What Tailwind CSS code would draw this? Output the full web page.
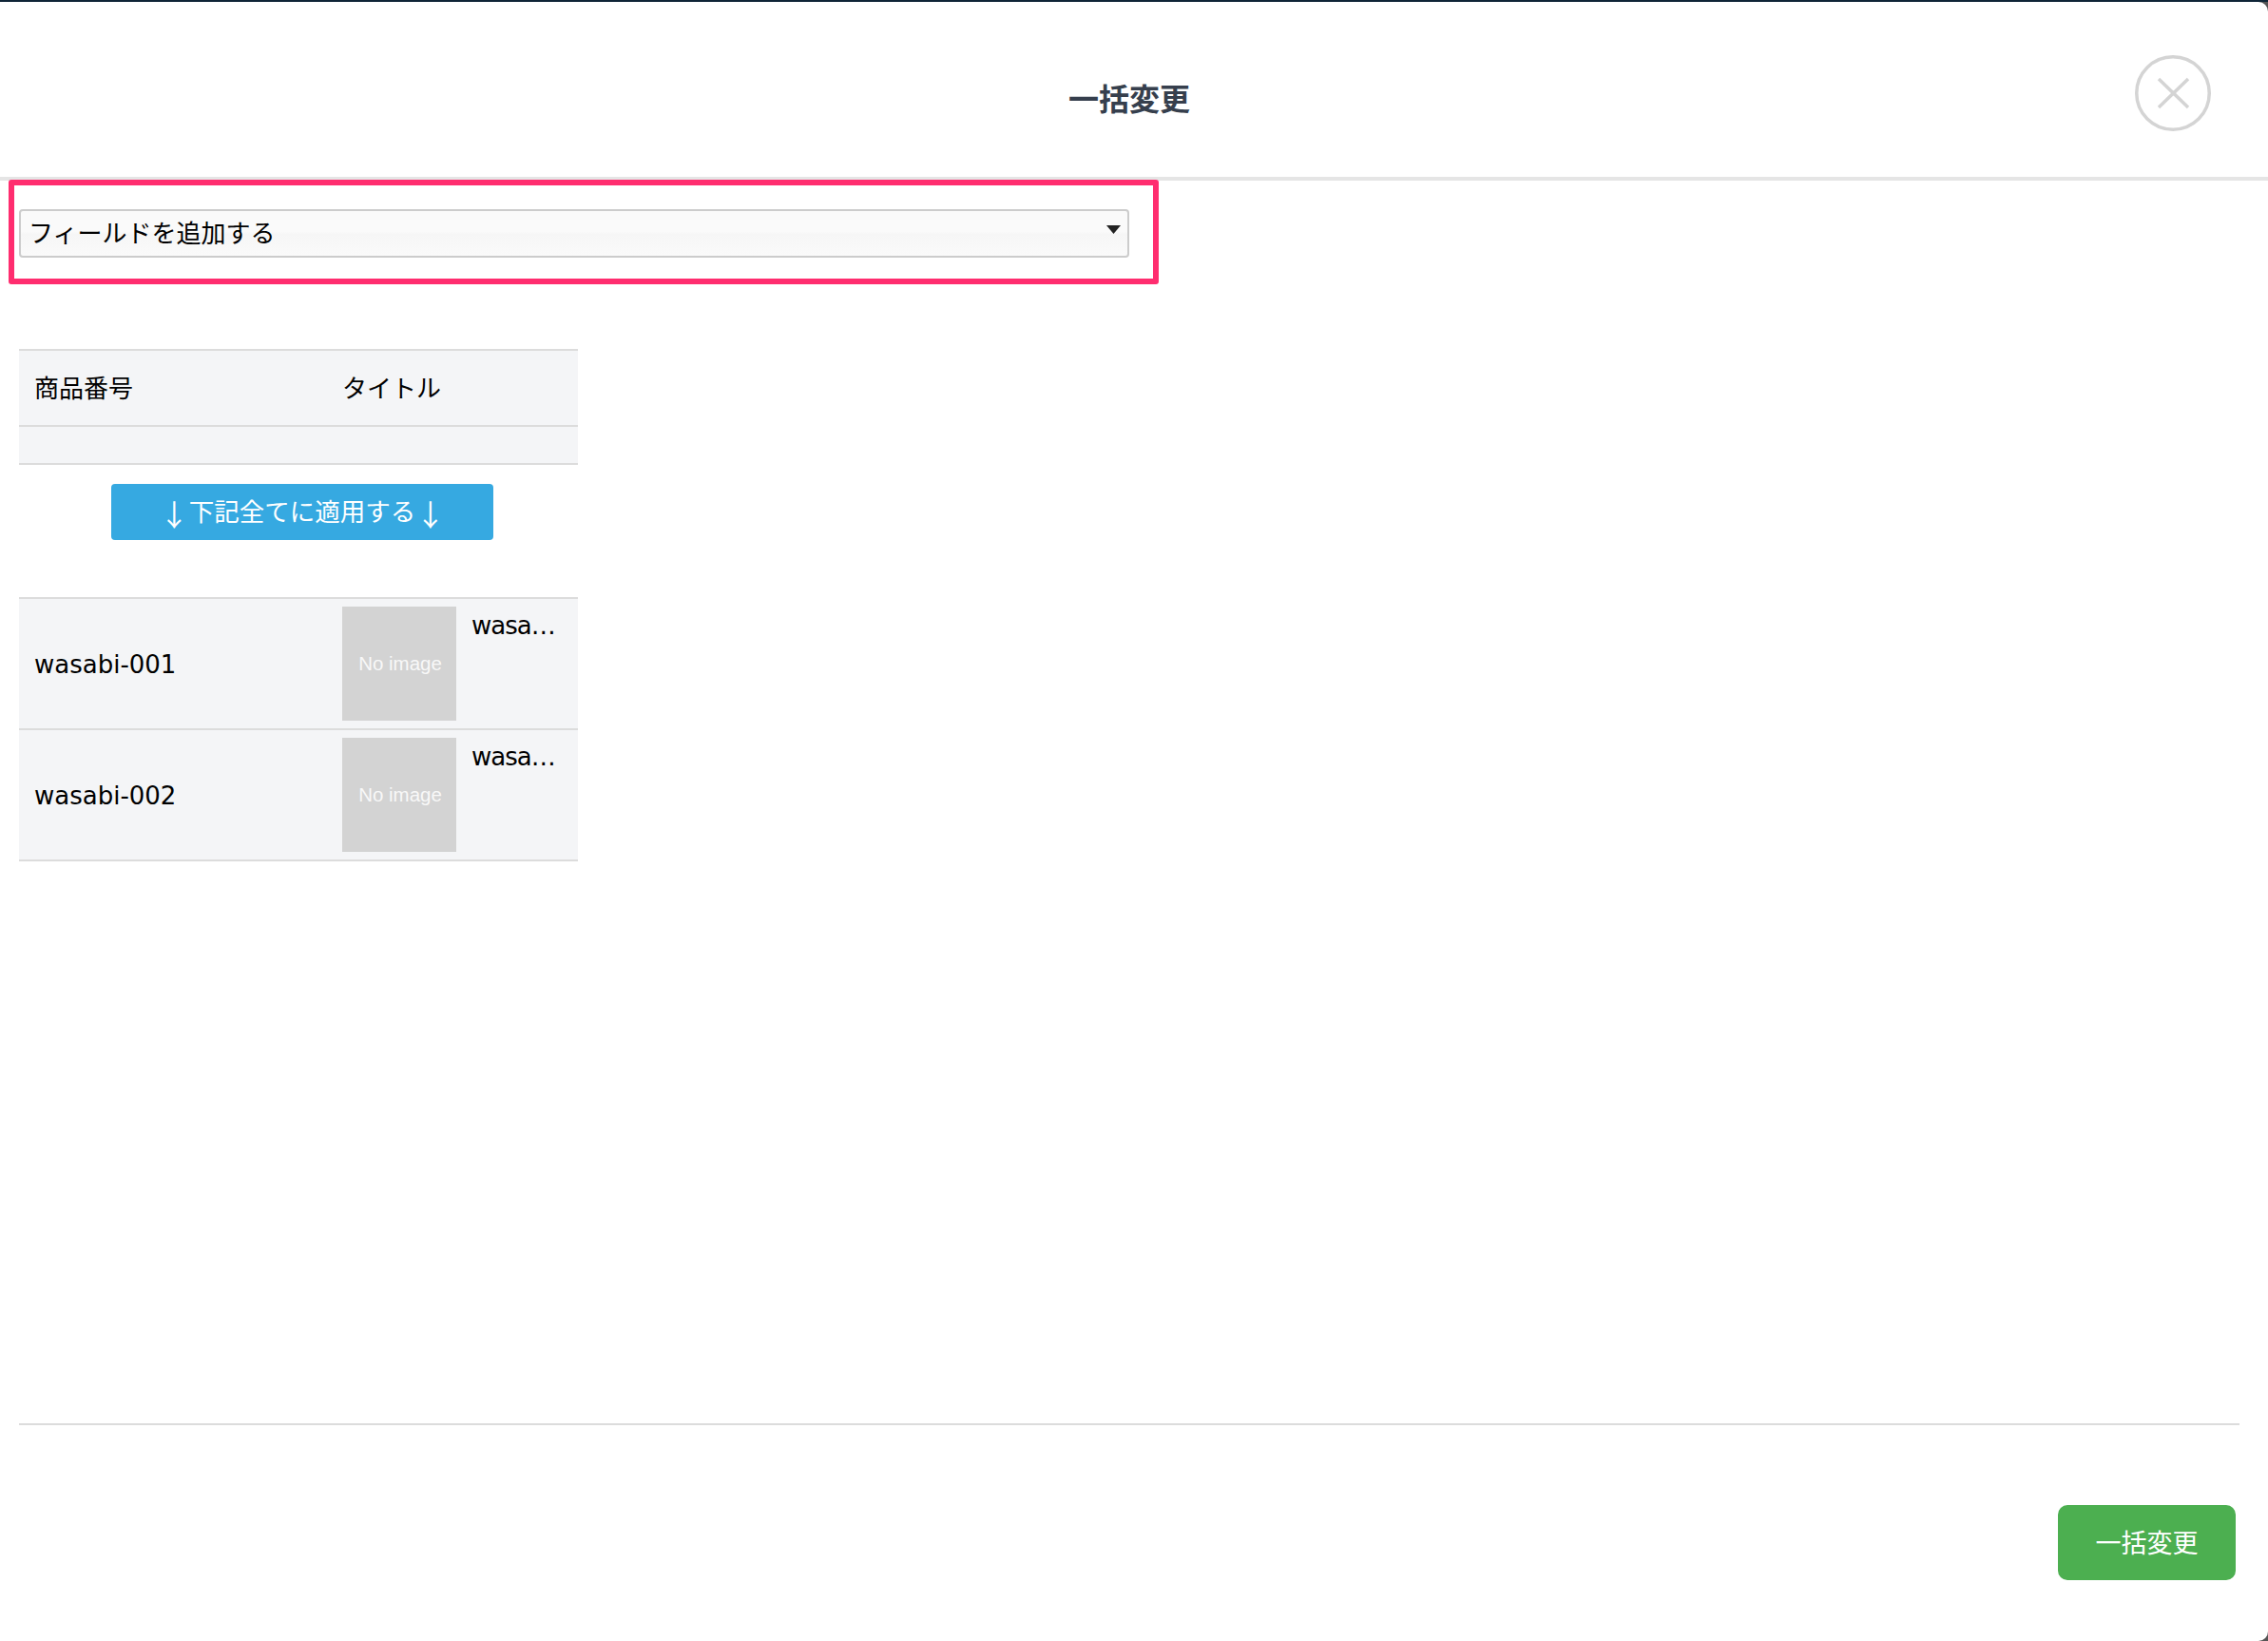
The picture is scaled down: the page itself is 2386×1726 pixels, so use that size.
<!DOCTYPE html>
<html lang="ja">
<head>
<meta charset="utf-8">
<title>一括変更</title>
<script src="https://cdn.jsdelivr.net/npm/@tailwindcss/browser@4"></script>
</head>
<body class="bg-[#555555] m-0">
<div class="relative w-[2386px] h-[1726px] overflow-hidden bg-[#555555] border-t-2 border-[#0f2537] font-['Noto_Sans_CJK_JP','Noto_Sans_CJK_SC',sans-serif] text-[26px] text-black">
  <div class="flex flex-col h-[1724px] bg-white rounded-tr-[10px] rounded-br-[10px]">
    <header class="relative h-[188px] shrink-0 flex items-center justify-center border-b-[4px] border-[#e5e5e5] pr-[10px]">
      <h1 class="text-[32px] font-bold text-[#363f4d] leading-none mt-[16px]">一括変更</h1>
      <button class="absolute left-[2246px] top-[56px] w-[80px] h-[80px]" aria-label="閉じる">
        <svg viewBox="0 0 80 80" class="w-[80px] h-[80px]" fill="none" stroke="#d4d4d4" stroke-width="3.5">
          <circle cx="40" cy="40" r="38.25"/>
          <path d="M25 25 L56 55 M56 25 L25 55"/>
        </svg>
      </button>
    </header>
    <main class="flex-1 flex flex-col relative">
      <div class="ml-[9px] mt-[-1px] w-[1210px] h-[110px] border-[6px] border-[#ff2d6f] rounded-[3px] pl-[5px] pt-[25px]">
        <div class="relative w-[1168px] h-[51px] border-2 border-[#cccccc] rounded-[4px] bg-[linear-gradient(to_bottom,#fafafa_0%,#fafafa_46%,#f6f6f6_52%,#fafafa_100%)] flex items-center pl-[8px] pb-[3px] leading-none">
          <span>フィールドを追加する</span>
          <svg class="absolute right-[7px] top-[15px] w-[15px] h-[9px]" viewBox="0 0 15 9"><path d="M0 0 H15 L7.5 9 Z" fill="#222222"/></svg>
        </div>
      </div>
      <section class="ml-[20px] w-[588px] mt-[68px]">
        <div class="bg-[#f4f5f7] border-y-2 border-[#dcdcdc] h-[82px] grid grid-cols-[340px_1fr] items-center pb-[3px]">
          <div class="pl-[16px]">商品番号</div>
          <div>タイトル</div>
        </div>
        <div class="bg-[#f4f5f7] border-b-2 border-[#dcdcdc] h-[40px]"></div>
        <div class="h-[139px] pt-[20px]">
          <button class="flex items-center justify-center ml-[97px] w-[402px] h-[59px] rounded-[4px] bg-[#36a9e1] text-white leading-none pb-[3px]">
            <span class="text-[31px] pt-[4px]">↓</span>
            <span class="text-[26.5px]">下記全てに適用する</span>
            <span class="text-[31px] pt-[4px]">↓</span>
          </button>
        </div>
        <div class="border-t-2 border-[#dcdcdc]">
          <div class="bg-[#f4f5f7] border-b-2 border-[#dcdcdc] h-[138px] grid grid-cols-[340px_120px_1fr] items-center">
            <div class="pl-[16px] pt-[2px] font-['DejaVu_Sans',sans-serif]">wasabi-001</div>
            <div class="w-[120px] h-[120px] bg-[#d3d3d3] flex items-center justify-center pl-[2px] text-[#f8f8f8] text-[20.5px] font-['Liberation_Sans',sans-serif]">No image</div>
            <div class="self-start pl-[16px] pt-[9px] tracking-[-1px] font-['DejaVu_Sans',sans-serif]">wasa…</div>
          </div>
          <div class="bg-[#f4f5f7] border-b-2 border-[#dcdcdc] h-[138px] grid grid-cols-[340px_120px_1fr] items-center">
            <div class="pl-[16px] pt-[2px] font-['DejaVu_Sans',sans-serif]">wasabi-002</div>
            <div class="w-[120px] h-[120px] bg-[#d3d3d3] flex items-center justify-center pl-[2px] text-[#f8f8f8] text-[20.5px] font-['Liberation_Sans',sans-serif]">No image</div>
            <div class="self-start pl-[16px] pt-[9px] tracking-[-1px] font-['DejaVu_Sans',sans-serif]">wasa…</div>
          </div>
        </div>
      </section>
      <footer class="mt-auto ml-[20px] mr-[30px] h-[229px] border-t-2 border-[#dcdcdc] flex justify-end items-start pt-[84px] pr-[4px]">
        <button class="w-[187px] h-[79px] rounded-[10px] bg-[#4caf50] text-white text-[27px] leading-none pb-[3px]">一括変更</button>
      </footer>
    </main>
  </div>
</div>
</body>
</html>
